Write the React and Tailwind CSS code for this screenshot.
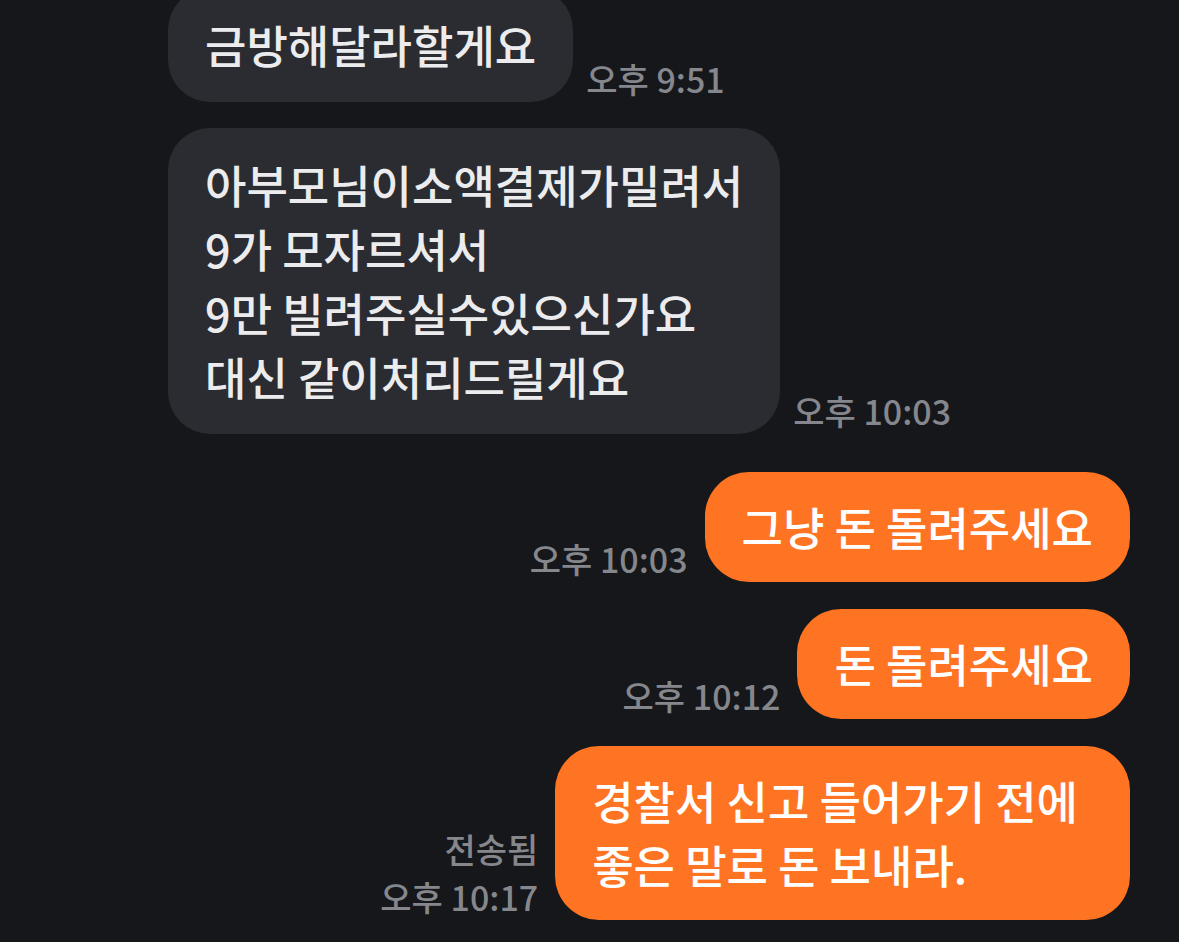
const font = { fontFamily: '"Noto Sans CJK KR", "Noto Sans", sans-serif' };

function Received({ lines, time, className = "" }) {
  return (
    <div className={`flex items-end gap-[13px] pl-[168px] ${className}`}>
      <div className="rounded-[42px] bg-[#2a2c31] px-[37px] py-[25px] text-[45px] font-medium leading-[64px] text-[#ececee]">
        {lines.map((l, i) => (
          <div key={i}>{l}</div>
        ))}
      </div>
      <div className="mb-[6px] text-[34px] font-medium leading-none text-[#85878c]">{time}</div>
    </div>
  );
}

function Sent({ lines, time, status, className = "", pad = "pr-[37px]" }) {
  return (
    <div className={`flex items-end justify-end gap-[17px] pr-[49px] ${className}`}>
      <div className="mb-[6px] flex flex-col items-end gap-[14px] text-[34px] font-medium leading-none text-[#85878c]">
        {status && <div>{status}</div>}
        <div>{time}</div>
      </div>
      <div className={`rounded-[44px] bg-[#ff7422] pl-[37px] ${pad} py-[23px] text-[45px] font-medium leading-[64px] text-white`}>
        {lines.map((l, i) => (
          <div key={i}>{l}</div>
        ))}
      </div>
    </div>
  );
}

export default function App() {
  return (
    <div className="h-[942px] w-[1179px] overflow-hidden bg-[#16171b]" style={font}>
      <Received className="-mt-[12px]" lines={["금방해달라할게요"]} time="오후 9:51" />
      <Received
        className="mt-[26px]"
        lines={["아부모님이소액결제가밀려서", "9가 모자르셔서", "9만 빌려주실수있으신가요", "대신 같이처리드릴게요"]}
        time="오후 10:03"
      />
      <Sent className="mt-[38px]" lines={["그냥 돈 돌려주세요"]} time="오후 10:03" />
      <Sent className="mt-[27px]" lines={["돈 돌려주세요"]} time="오후 10:12" />
      <Sent
        className="mt-[27px]"
        pad="pr-[52px]"
        lines={["경찰서 신고 들어가기 전에", "좋은 말로 돈 보내라."]}
        status="전송됨"
        time="오후 10:17"
      />
    </div>
  );
}
